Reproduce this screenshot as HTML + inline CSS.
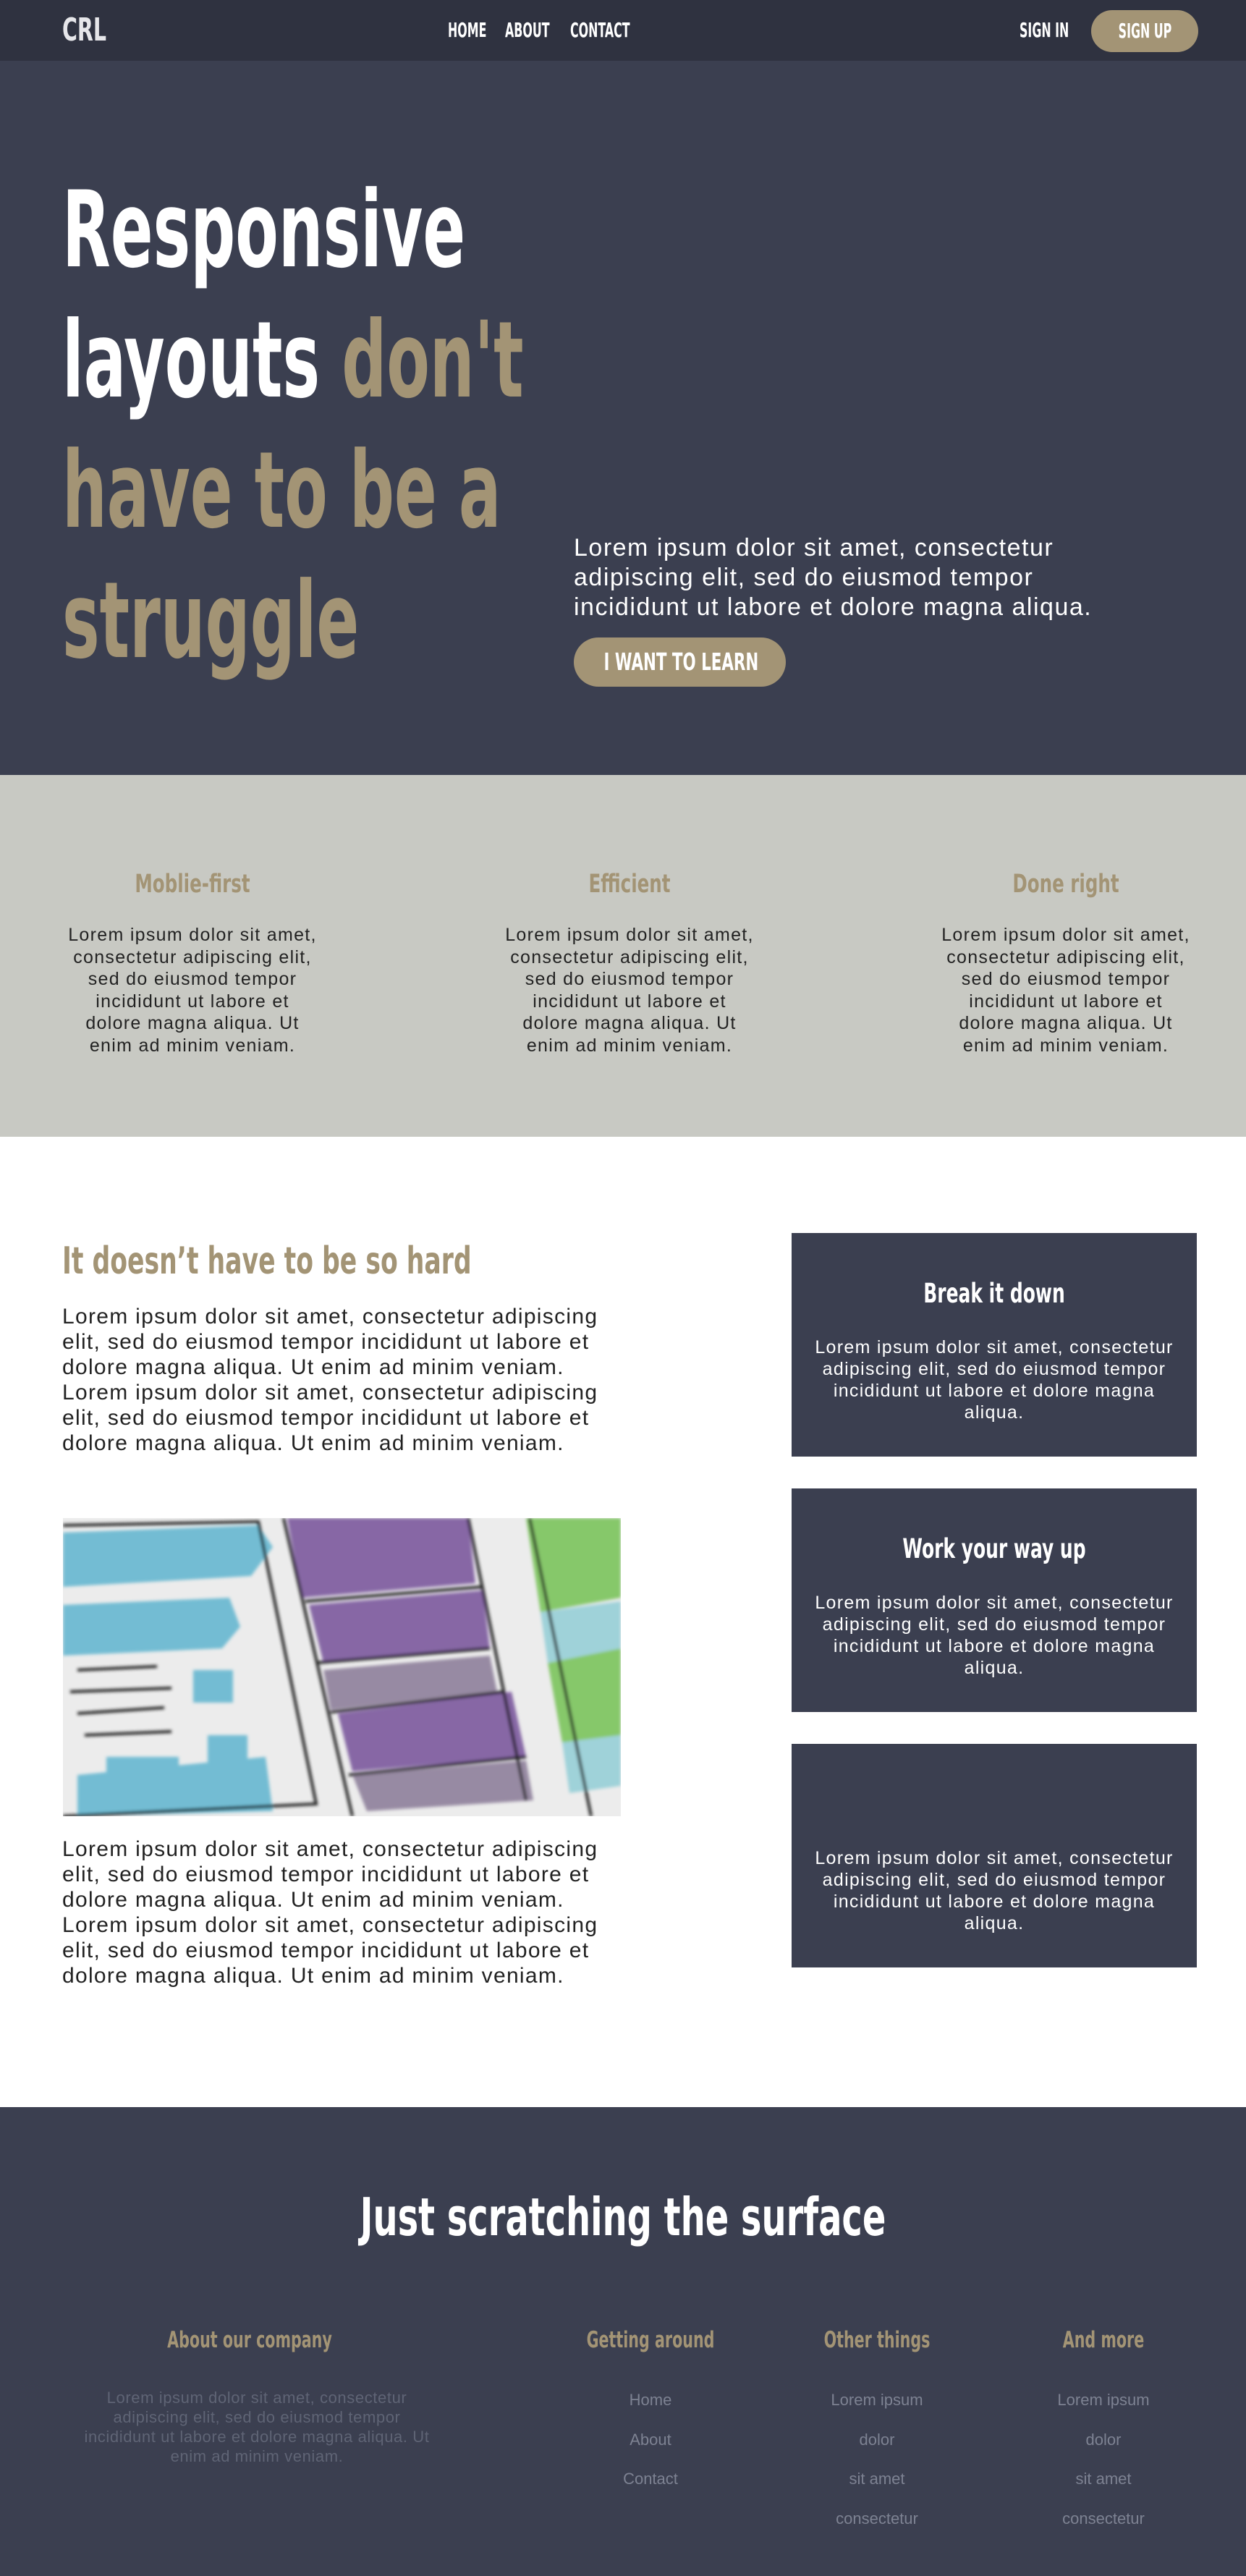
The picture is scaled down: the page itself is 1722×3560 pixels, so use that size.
<!DOCTYPE html>
<html><head><meta charset="utf-8"><style>
*{margin:0;padding:0;box-sizing:border-box}
body{width:1722px;height:3560px;position:relative;background:#fff;font-family:"Liberation Sans",sans-serif;overflow:hidden}
.a{position:absolute}
.c{font-family:"DejaVu Sans Condensed","Liberation Sans",sans-serif;font-weight:bold;white-space:nowrap}
.tan{color:#a39475}
.ctr{text-align:center}
.s{display:inline-block}
</style></head><body>
<!-- nav -->
<div class="a" style="left:0;top:0;width:1722px;height:84px;background:#2f3240"></div>
<div class="a c" style="left:86px;top:14px;font-size:44px;color:#e6e6ea;line-height:56px;transform:scaleX(0.72);transform-origin:left">CRL</div>
<div class="a c" style="left:619px;top:25px;font-size:28px;color:#fff;line-height:34px;transform:scaleX(0.63);transform-origin:left">HOME</div>
<div class="a c" style="left:698px;top:25px;font-size:28px;color:#fff;line-height:34px;transform:scaleX(0.63);transform-origin:left">ABOUT</div>
<div class="a c" style="left:788px;top:25px;font-size:28px;color:#fff;line-height:34px;transform:scaleX(0.63);transform-origin:left">CONTACT</div>
<div class="a c" style="left:1409px;top:25px;font-size:28px;color:#fff;line-height:34px;transform:scaleX(0.63);transform-origin:left">SIGN IN</div>
<div class="a c ctr" style="left:1508px;top:14px;width:148px;height:58px;border-radius:29px;background:#a39475;color:#fff;font-size:28px;line-height:58px"><span class="s" style="transform:scaleX(0.63)">SIGN UP</span></div>
<!-- hero -->
<div class="a" style="left:0;top:84px;width:1722px;height:987px;background:#3b3f50"></div>
<div class="a c" style="left:86px;top:228px;font-size:146px;line-height:180px;color:#fff;transform:scaleX(0.66);transform-origin:left">
<div>Responsive</div><div>layouts <span class="tan">don't</span></div><div class="tan">have to be a</div><div class="tan">struggle</div></div>
<div class="a" style="left:793px;top:737px;font-size:34px;line-height:41px;color:#fff;white-space:nowrap;letter-spacing:1.5px">Lorem ipsum dolor sit amet, consectetur<br>adipiscing elit, sed do eiusmod tempor<br>incididunt ut labore et dolore magna aliqua.</div>
<div class="a c ctr" style="left:793px;top:881px;width:293px;height:68px;border-radius:34px;background:#a39475;color:#fff;font-size:33px;line-height:68px"><span class="s" style="transform:scaleX(0.72)">I WANT TO LEARN</span></div>
<!-- features -->
<div class="a" style="left:0;top:1071px;width:1722px;height:500px;background:#c8c9c3"></div>
<div class="a c ctr tan" style="left:66px;top:1200px;width:400px;font-size:35px;line-height:44px;transform:scaleX(0.78)">Moblie-first</div>
<div class="a c ctr tan" style="left:670px;top:1200px;width:400px;font-size:35px;line-height:44px;transform:scaleX(0.78)">Efficient</div>
<div class="a c ctr tan" style="left:1273px;top:1200px;width:400px;font-size:35px;line-height:44px;transform:scaleX(0.78)">Done right</div>
<div class="a ctr" style="left:36px;top:1277px;width:460px;font-size:25px;line-height:30.5px;color:#222;letter-spacing:1.3px">Lorem ipsum dolor sit amet,<br>consectetur adipiscing elit,<br>sed do eiusmod tempor<br>incididunt ut labore et<br>dolore magna aliqua. Ut<br>enim ad minim veniam.</div>
<div class="a ctr" style="left:640px;top:1277px;width:460px;font-size:25px;line-height:30.5px;color:#222;letter-spacing:1.3px">Lorem ipsum dolor sit amet,<br>consectetur adipiscing elit,<br>sed do eiusmod tempor<br>incididunt ut labore et<br>dolore magna aliqua. Ut<br>enim ad minim veniam.</div>
<div class="a ctr" style="left:1243px;top:1277px;width:460px;font-size:25px;line-height:30.5px;color:#222;letter-spacing:1.3px">Lorem ipsum dolor sit amet,<br>consectetur adipiscing elit,<br>sed do eiusmod tempor<br>incididunt ut labore et<br>dolore magna aliqua. Ut<br>enim ad minim veniam.</div>
<!-- main -->
<div class="a c tan" style="left:86px;top:1712px;font-size:52px;line-height:62px;transform:scaleX(0.74);transform-origin:left">It doesn’t have to be so hard</div>
<div class="a" style="left:86px;top:1802px;font-size:30px;line-height:35px;color:#222;white-space:nowrap;letter-spacing:1.3px">Lorem ipsum dolor sit amet, consectetur adipiscing<br>elit, sed do eiusmod tempor incididunt ut labore et<br>dolore magna aliqua. Ut enim ad minim veniam.<br>Lorem ipsum dolor sit amet, consectetur adipiscing<br>elit, sed do eiusmod tempor incididunt ut labore et<br>dolore magna aliqua. Ut enim ad minim veniam.</div>
<svg class="a" style="left:87px;top:2098px" width="771" height="412" viewBox="0 0 771 412">
<defs><filter id="b"><feGaussianBlur stdDeviation="2"/></filter></defs>
<rect width="771" height="412" fill="#ececec"/>
<g filter="url(#b)">
<g fill="#5fb4cf" opacity="0.85">
<path d="M0 20 L270 10 L290 40 L260 80 L0 95Z"/><path d="M0 120 L230 110 L245 150 L220 180 L0 190Z"/>
<rect x="180" y="210" width="55" height="45"/><rect x="200" y="300" width="55" height="60"/><rect x="60" y="330" width="100" height="40"/>
<path d="M20 355 L280 330 L290 405 L20 412Z"/></g>
<g fill="#7d5a9e" opacity="0.9"><path d="M310 0 L560 0 L570 90 L330 110Z"/><path d="M340 120 L580 100 L590 180 L360 200Z"/><path d="M380 270 L620 240 L640 330 L400 350Z"/></g>
<g fill="#978aa3"><path d="M360 210 L590 190 L600 240 L370 265Z"/><path d="M400 355 L640 335 L650 390 L420 405Z"/></g>
<g fill="#86c86a"><path d="M640 0 L771 0 L771 110 L660 130Z"/><path d="M670 200 L771 180 L771 300 L690 310Z"/></g>
<g fill="#9fd2d9"><path d="M660 130 L771 115 L771 180 L670 200Z"/><path d="M690 310 L771 300 L771 370 L700 380Z"/></g>
<g stroke="#222" stroke-width="4" fill="none"><path d="M0 10 L270 5 L350 395 L0 412"/><path d="M305 0 L400 412"/><path d="M560 0 L640 390"/><path d="M20 210 L130 205 M10 240 L150 235 M20 270 L140 262 M30 300 L150 295"/><path d="M335 115 L580 95 M350 200 L590 180 M370 268 L610 240 M395 355 L640 330"/><path d="M645 0 L730 412"/></g>
</g>
</svg>
<div class="a" style="left:86px;top:2538px;font-size:30px;line-height:35px;color:#222;white-space:nowrap;letter-spacing:1.3px">Lorem ipsum dolor sit amet, consectetur adipiscing<br>elit, sed do eiusmod tempor incididunt ut labore et<br>dolore magna aliqua. Ut enim ad minim veniam.<br>Lorem ipsum dolor sit amet, consectetur adipiscing<br>elit, sed do eiusmod tempor incididunt ut labore et<br>dolore magna aliqua. Ut enim ad minim veniam.</div>
<!-- cards -->
<div class="a" style="left:1094px;top:1704px;width:560px;height:309px;background:#3b3f50"></div>
<div class="a" style="left:1094px;top:2057px;width:560px;height:309px;background:#3b3f50"></div>
<div class="a" style="left:1094px;top:2410px;width:560px;height:309px;background:#3b3f50"></div>
<div class="a c ctr" style="left:1094px;top:1766px;width:560px;font-size:37px;line-height:44px;color:#fff;transform:scaleX(0.75)">Break it down</div>
<div class="a c ctr" style="left:1094px;top:2119px;width:560px;font-size:37px;line-height:44px;color:#fff;transform:scaleX(0.75)">Work your way up</div>
<div class="a ctr" style="left:1094px;top:1847px;width:560px;font-size:25px;line-height:30px;color:#fff;letter-spacing:1.3px">Lorem ipsum dolor sit amet, consectetur<br>adipiscing elit, sed do eiusmod tempor<br>incididunt ut labore et dolore magna<br>aliqua.</div>
<div class="a ctr" style="left:1094px;top:2200px;width:560px;font-size:25px;line-height:30px;color:#fff;letter-spacing:1.3px">Lorem ipsum dolor sit amet, consectetur<br>adipiscing elit, sed do eiusmod tempor<br>incididunt ut labore et dolore magna<br>aliqua.</div>
<div class="a ctr" style="left:1094px;top:2553px;width:560px;font-size:25px;line-height:30px;color:#fff;letter-spacing:1.3px">Lorem ipsum dolor sit amet, consectetur<br>adipiscing elit, sed do eiusmod tempor<br>incididunt ut labore et dolore magna<br>aliqua.</div>
<!-- footer -->
<div class="a" style="left:0;top:2912px;width:1722px;height:648px;background:#3b3f50"></div>
<div class="a c ctr" style="left:0;top:3020px;width:1722px;font-size:72px;line-height:88px;color:#fff;transform:scaleX(0.74)">Just scratching the surface</div>
<div class="a c ctr tan" style="left:145px;top:3214px;width:400px;font-size:31px;line-height:40px;transform:scaleX(0.74)">About our company</div>
<div class="a c ctr tan" style="left:749px;top:3214px;width:300px;font-size:31px;line-height:40px;transform:scaleX(0.74)">Getting around</div>
<div class="a c ctr tan" style="left:1062px;top:3214px;width:300px;font-size:31px;line-height:40px;transform:scaleX(0.74)">Other things</div>
<div class="a c ctr tan" style="left:1375px;top:3214px;width:300px;font-size:31px;line-height:40px;transform:scaleX(0.74)">And more</div>
<div class="a ctr" style="left:85px;top:3300px;width:540px;font-size:22px;line-height:27px;color:#5f6475;letter-spacing:0.6px">Lorem ipsum dolor sit amet, consectetur<br>adipiscing elit, sed do eiusmod tempor<br>incididunt ut labore et dolore magna aliqua. Ut<br>enim ad minim veniam.</div>
<div class="a ctr" style="left:749px;top:3290px;width:300px;font-size:22px;line-height:54.5px;color:#7d8292">Home<br>About<br>Contact</div>
<div class="a ctr" style="left:1062px;top:3290px;width:300px;font-size:22px;line-height:54.5px;color:#7d8292">Lorem ipsum<br>dolor<br>sit amet<br>consectetur</div>
<div class="a ctr" style="left:1375px;top:3290px;width:300px;font-size:22px;line-height:54.5px;color:#7d8292">Lorem ipsum<br>dolor<br>sit amet<br>consectetur</div>
</body></html>
